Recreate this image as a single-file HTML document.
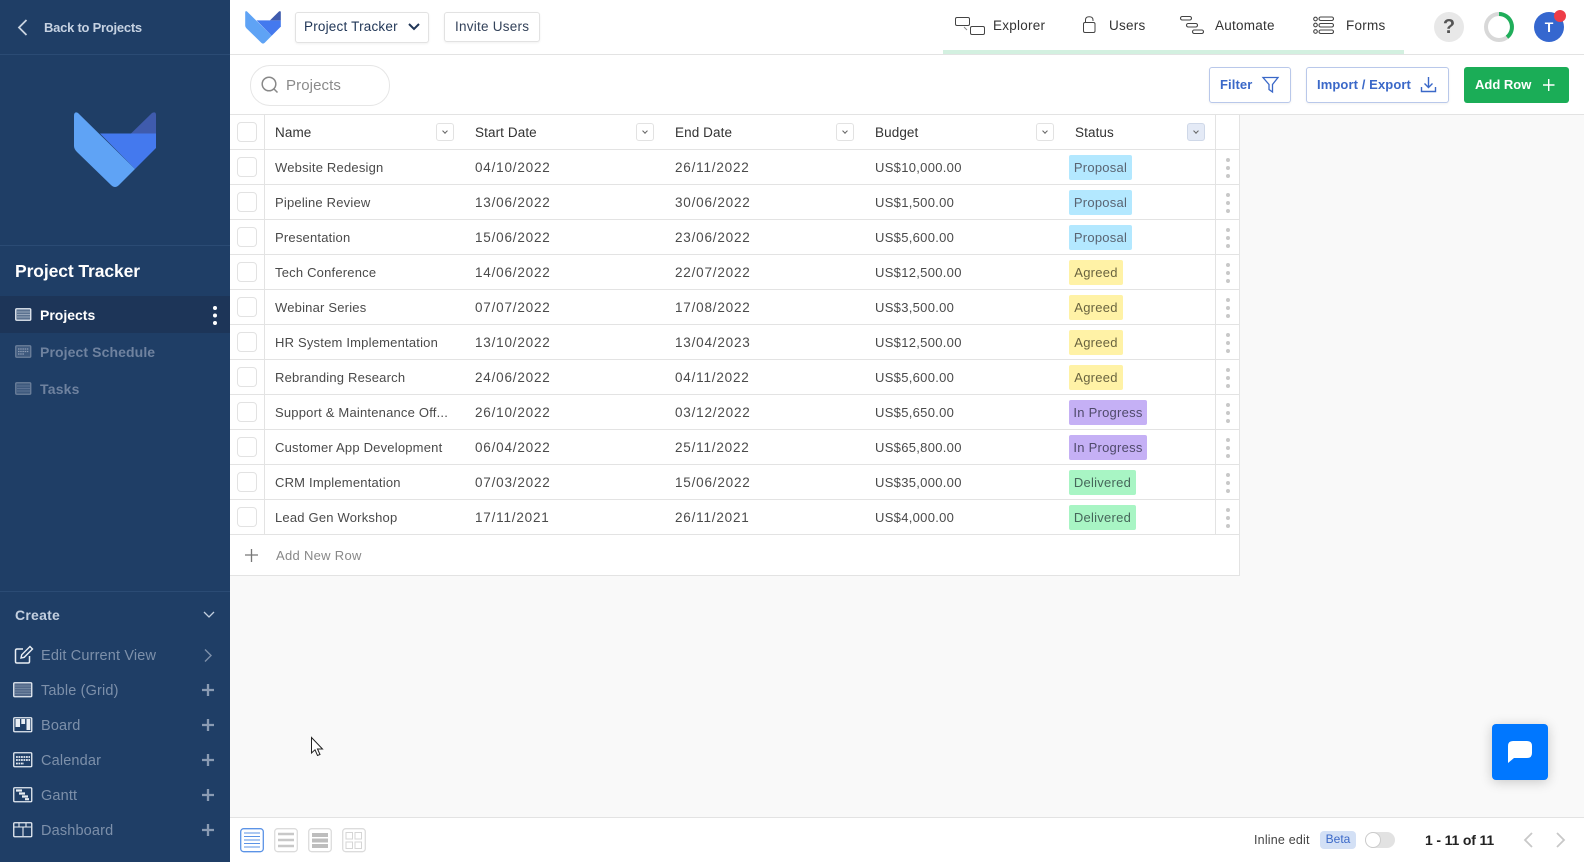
<!DOCTYPE html>
<html><head><meta charset="utf-8"><title>Project Tracker</title>
<style>
html,body{margin:0;padding:0}
body{width:1584px;height:862px;overflow:hidden;background:#f9f9f9;position:relative;font-family:"Liberation Sans",sans-serif;color:#4a4a4a;font-size:14px}
.a{position:absolute;white-space:nowrap}
svg{position:absolute;overflow:visible}
.t{position:absolute;white-space:nowrap;line-height:20px;height:20px;letter-spacing:.25px}
.n{left:275px;font-size:13px;letter-spacing:.2px;margin-top:1px}
.dt{font-size:13.5px;letter-spacing:.8px;margin-top:1px}
.s{left:475px}.e{left:675px}
.bu{left:875px;font-size:13px;letter-spacing:.3px;margin-top:1px}
.h{font-size:13.5px;letter-spacing:.1px;color:#333;top:123px}
.l{position:absolute;background:#e3e3e3}
.cb{position:absolute;left:237px;width:18px;height:18px;border:1px solid #e2e2e2;border-radius:4px;background:#fff}
.sort{position:absolute;top:123px;width:16px;height:16px;border:1px solid #e2e2e2;border-radius:3px;background:#fff}
.sort:after{content:"";position:absolute;left:5.5px;top:4.5px;width:3px;height:3px;border-right:1px solid #666;border-bottom:1px solid #666;transform:rotate(45deg)}
.badge{position:absolute;left:1069px;height:25px;line-height:25px;border-radius:2px;text-align:center;letter-spacing:.25px;font-size:13px;color:#5a6472}
.p{background:#b3e8ff;width:63px}.g{background:#fff2a6;width:54px;color:#6a6440}.i{background:#c5b0f5;width:78px;color:#4f4a6a}.d{background:#a8f5c4;width:67px;color:#46665a}
.dots{position:absolute;left:1226px;width:4px;height:4px;border-radius:50%;background:#c8c8c8;box-shadow:0 8px 0 #c8c8c8,0 16px 0 #c8c8c8}
.side{color:#7d90aa;font-size:14.5px;letter-spacing:.15px}
.nav{color:#333;font-size:13.5px;letter-spacing:.25px;top:16px}
.btn{position:absolute;background:#fff;border:1px solid #b9c8ea;border-radius:3px;box-shadow:0 1px 2px rgba(0,0,0,.06);box-sizing:border-box}
.bt{color:#3a68c8;font-size:13px;font-weight:bold;letter-spacing:.1px;top:75px}
</style></head><body>

<!-- sidebar -->
<div class="a" style="left:0;top:0;width:230px;height:862px;background:#1f3e66"></div>
<div class="a" style="left:0;top:54px;width:230px;height:1px;background:#2b4b74"></div>
<div class="a" style="left:0;top:245px;width:230px;height:1px;background:#2b4b74"></div>
<div class="a" style="left:0;top:591px;width:230px;height:1px;background:#2b4b74"></div>
<div class="a" style="left:0;top:296px;width:230px;height:37px;background:#1d3558"></div>
<svg style="left:0;top:0" width="230" height="60"><path d="M26.5 20 L19 27.5 L26.500 35" fill="none" stroke="#c9d3e0" stroke-width="1.8"/></svg>
<div class="t" style="left:44px;top:18px;color:#c6d2e2;font-size:13px;font-weight:bold;letter-spacing:-.25px">Back to Projects</div>
<svg style="left:74px;top:112px" width="82" height="76" viewBox="0 0 82 76">
<path d="M26 21.5H82V36L61 57Z" fill="#4479ee"/>
<path d="M57 21.5L78 1Q82-1 82 3V21.5Z" fill="#3f5bad"/>
<path d="M0 4Q0-1 4 1L61 57 45 73Q41 77 37 73L3 40Q0 37 0 34Z" fill="#5fa3f5"/>
</svg>
<div class="t" style="left:15px;top:261px;color:#fff;font-size:17.5px;font-weight:bold;letter-spacing:-.1px">Project Tracker</div>

<svg style="left:15px;top:308px" width="18" height="14"><rect x=".75" y=".75" width="15" height="11.5" rx="1" fill="#5b7290" stroke="#e8edf3" stroke-width="1.3"/><path d="M2 4h13M2 6.5h13M2 9h13" stroke="#a9b6c8" stroke-width=".7"/></svg>
<div class="t" style="left:40px;top:305px;color:#fff;font-size:14px;font-weight:bold;letter-spacing:0">Projects</div>
<div class="a" style="left:213px;top:306px;width:4px;height:4px;border-radius:50%;background:#fff;box-shadow:0 7.5px 0 #fff,0 15px 0 #fff"></div>

<svg style="left:15px;top:345px" width="18" height="14"><rect x=".75" y=".75" width="15" height="11.5" rx="1" fill="#3f5a7e" stroke="#6d809b" stroke-width="1.3"/><path d="M3 4h11M3 6.5h11M3 9h6" stroke="#8c9cb3" stroke-width="1.2" stroke-dasharray="1.5 .7"/></svg>
<div class="t" style="left:40px;top:342px;color:#6f829f;font-size:14px;font-weight:bold;letter-spacing:.1px">Project Schedule</div>
<svg style="left:15px;top:382px" width="18" height="14"><rect x=".75" y=".75" width="15" height="11.5" rx="1" fill="#3f5a7e" stroke="#6d809b" stroke-width="1.3"/><path d="M2 4h13M2 6.5h13M2 9h13" stroke="#66799a" stroke-width=".7"/></svg>
<div class="t" style="left:40px;top:379px;color:#6f829f;font-size:14px;font-weight:bold;letter-spacing:.2px">Tasks</div>

<div class="t" style="left:15px;top:605px;color:#c3cfdf;font-size:14px;font-weight:bold">Create</div>
<svg style="left:200px;top:609px" width="20" height="14"><path d="M4 3l5 5 5-5" fill="none" stroke="#c3cfdf" stroke-width="1.3"/></svg>

<svg style="left:14px;top:645px" width="20" height="20"><path d="M9 4H3Q1.5 4 1.5 5.5V16.5Q1.5 18 3 18H14Q15.5 18 15.5 16.5V11" fill="none" stroke="#e8edf3" stroke-width="1.5"/><path d="M7 13l.7-3.2L16 1.5l2.5 2.500-8.300 8.300Z" fill="none" stroke="#e8edf3" stroke-width="1.4"/></svg>
<div class="t side" style="left:41px;top:646px">Edit Current View</div>
<svg style="left:200px;top:647px" width="16" height="16"><path d="M5 2.500l6 6-6 6" fill="none" stroke="#7d90aa" stroke-width="1.4"/></svg>

<svg style="left:13px;top:682px" width="20" height="16"><rect x=".75" y=".75" width="18" height="14" rx="1" fill="#53698a" stroke="#e8edf3" stroke-width="1.3"/><path d="M2 4h16M2 6.500h16M2 9h16M2 11.500h16" stroke="#7b8ea8" stroke-width=".8"/></svg>
<div class="t side" style="left:41px;top:681px">Table (Grid)</div>
<svg style="left:13px;top:717px" width="20" height="16"><rect x=".75" y=".75" width="18" height="14" rx="1" fill="none" stroke="#e8edf3" stroke-width="1.3"/><path d="M2.500 2h4.500v8H2.500zM8.300 2h3.800v5H8.300zM13.500 2h3.800v11h-3.800z" fill="#e8edf3"/></svg>
<div class="t side" style="left:41px;top:716px">Board</div>
<svg style="left:13px;top:752px" width="20" height="16"><rect x=".75" y=".75" width="18" height="14" rx="1" fill="none" stroke="#e8edf3" stroke-width="1.3"/><path d="M3 5h14M3 8h14" stroke="#e8edf3" stroke-width="1.800" stroke-dasharray="1.800 .7"/><path d="M3 11.500h8" stroke="#e8edf3" stroke-width="1.800" stroke-dasharray="1.800 .7"/></svg>
<div class="t side" style="left:41px;top:751px">Calendar</div>
<svg style="left:13px;top:787px" width="20" height="16"><rect x=".75" y=".75" width="18" height="14" rx="1" fill="none" stroke="#e8edf3" stroke-width="1.3"/><path d="M3 3.500h6M6 6.500h6M9 9.500h6M12 12.200h4" stroke="#e8edf3" stroke-width="2.200"/></svg>
<div class="t side" style="left:41px;top:786px">Gantt</div>
<svg style="left:13px;top:822px" width="20" height="16"><rect x=".75" y=".75" width="18" height="14" rx="1" fill="none" stroke="#e8edf3" stroke-width="1.3"/><path d="M1 5h17M10 5v9M6 1v4M13 1v4" stroke="#e8edf3" stroke-width="1.100"/></svg>
<div class="t side" style="left:41px;top:821px">Dashboard</div>
<svg style="left:202px;top:683px" width="14" height="160"><g stroke="#8a9bb3" stroke-width="2.300"><path d="M0 7h12M6 1v12"/><path d="M0 42h12M6 36v12"/><path d="M0 77h12M6 71v12"/><path d="M0 112h12M6 106v12"/><path d="M0 147h12M6 141v12"/></g></svg>

<!-- top bar -->
<div class="a" style="left:230px;top:0;width:1354px;height:114px;background:#fff"></div>
<div class="l" style="left:230px;top:54px;width:1354px;height:1px"></div>
<div class="l" style="left:230px;top:114px;width:1354px;height:1px"></div>
<div class="a" style="left:943px;top:50px;width:461px;height:4px;background:#d3f0e0"></div>
<svg style="left:245px;top:11px" width="36" height="33" viewBox="0 0 82 76">
<path d="M26 21.500H82V36L61 57Z" fill="#4479ee"/>
<path d="M57 21.500L78 1Q82-1 82 3V21.500Z" fill="#3f5bad"/>
<path d="M0 4Q0-1 4 1L61 57 45 73Q41 77 37 73L3 40Q0 37 0 34Z" fill="#5fa3f5"/>
</svg>
<div class="btn" style="left:295px;top:12px;width:134px;height:31px;border-color:#e2e2e2"></div>
<div class="t" style="left:304px;top:17px;color:#1f3556;font-size:13.5px;letter-spacing:.2px">Project Tracker</div>
<svg style="left:407px;top:21px" width="14" height="12"><path d="M2 3l5 5 5-5" fill="none" stroke="#1f3556" stroke-width="2"/></svg>
<div class="btn" style="left:444px;top:12px;width:96px;height:30px;border-color:#e2e2e2"></div>
<div class="t" style="left:455px;top:17px;color:#33425a;font-size:13.5px;letter-spacing:.25px">Invite Users</div>

<svg style="left:955px;top:15px" width="34" height="24" fill="none" stroke="#444" stroke-width="1"><rect x=".5" y="2.500" width="14" height="8" rx="1.500"/><rect x="15.500" y="11.500" width="14" height="8" rx="1.500"/><path d="M9 12l3 3" stroke="#888"/></svg>
<div class="t nav" style="left:993px">Explorer</div>
<svg style="left:1083px;top:16px" width="16" height="20" fill="none" stroke="#444" stroke-width="1"><rect x=".5" y="6.500" width="11.500" height="10" rx="1.500"/><path d="M2.500 6.500V4Q2.500 .8 6.200 .8T10 4V5"/></svg>
<div class="t nav" style="left:1109px">Users</div>
<svg style="left:1180px;top:13px" width="26" height="24" fill="none" stroke="#444" stroke-width="1.100"><rect x=".5" y="3.500" width="11" height="3.500" rx="1.700"/><rect x="6.500" y="10.500" width="11" height="3.500" rx="1.700"/><rect x="12.500" y="17" width="11" height="3.500" rx="1.700"/></svg>
<div class="t nav" style="left:1215px">Automate</div>
<svg style="left:1313px;top:13px" width="22" height="24" fill="none" stroke="#444" stroke-width="1.100"><circle cx="2.500" cy="6" r="1.800"/><circle cx="2.500" cy="12" r="1.800"/><circle cx="2.500" cy="18.500" r="1.800"/><rect x="6" y="4" width="14.500" height="3.500" rx="1.700"/><rect x="6" y="10.500" width="14.500" height="3.500" rx="1.700"/><rect x="6" y="17" width="14.500" height="3.500" rx="1.700"/></svg>
<div class="t nav" style="left:1346px">Forms</div>

<div class="a" style="left:1434px;top:12px;width:30px;height:30px;border-radius:50%;background:#e8e8e8;text-align:center;line-height:30px;font-size:20px;font-weight:bold;color:#555">?</div>
<svg style="left:1484px;top:12px" width="30" height="30" fill="none" stroke-width="4"><circle cx="15" cy="15" r="13" stroke="#d8d8d8"/><path d="M15 2A13 13 0 0 1 23 25.200" stroke="#1fae5a"/></svg>
<div class="a" style="left:1534px;top:12px;width:30px;height:30px;border-radius:50%;background:#3567cf;text-align:center;line-height:30px;font-size:14px;font-weight:bold;color:#fff">T</div>
<div class="a" style="left:1554px;top:10px;width:12px;height:12px;border-radius:50%;background:#ee3d48"></div>

<!-- toolbar -->
<div class="a" style="left:250px;top:65px;width:138px;height:39px;border:1px solid #e6e6e6;border-radius:20px;background:#fff"></div>
<svg style="left:261px;top:76px" width="20" height="20" fill="none" stroke="#888" stroke-width="1.500"><circle cx="8" cy="8" r="6.800"/><path d="M13 13l3.500 3.500"/></svg>
<div class="t" style="left:286px;top:76px;color:#8a8a8a;font-size:15px;letter-spacing:.1px">Projects</div>

<div class="btn" style="left:1209px;top:67px;width:82px;height:36px"></div>
<div class="t bt" style="left:1220px">Filter</div>
<svg style="left:1262px;top:76px" width="18" height="18" fill="none" stroke="#3a68c8" stroke-width="1.300"><path d="M1 1.500H16L10.500 8.500V16L7 13.500V8.500Z"/></svg>
<div class="btn" style="left:1306px;top:67px;width:143px;height:36px"></div>
<div class="t bt" style="left:1317px">Import / Export</div>
<svg style="left:1420px;top:76px" width="18" height="18" fill="none" stroke="#3a68c8" stroke-width="1.400"><path d="M8.500 1v10M4.500 7.500l4 4 4-4M1.500 11v4.500h14V11"/></svg>
<div class="a" style="left:1464px;top:67px;width:105px;height:36px;background:#1bad57;border-radius:3px"></div>
<div class="t" style="left:1475px;top:75px;color:#fff;font-size:13px;font-weight:bold;letter-spacing:0">Add Row</div>
<svg style="left:1542px;top:78px" width="14" height="14"><path d="M1 7h11.500M6.700 1v12" stroke="#fff" stroke-width="1.400"/></svg>

<!-- table -->
<div class="a" style="left:230px;top:115px;width:1009px;height:460px;background:#fff"></div>
<div class="l" style="left:1239px;top:114px;width:1px;height:461px"></div>
<div class="l" style="left:230px;top:575px;width:1010px;height:1px"></div>
<div class="l" style="left:264px;top:115px;width:1px;height:419px"></div>
<div class="l" style="left:1215px;top:115px;width:1px;height:419px"></div>
<div class="l" style="left:230px;top:149px;width:1009px;height:1px"></div>
<div class="l" style="left:230px;top:184px;width:1009px;height:1px"></div>
<div class="l" style="left:230px;top:219px;width:1009px;height:1px"></div>
<div class="l" style="left:230px;top:254px;width:1009px;height:1px"></div>
<div class="l" style="left:230px;top:289px;width:1009px;height:1px"></div>
<div class="l" style="left:230px;top:324px;width:1009px;height:1px"></div>
<div class="l" style="left:230px;top:359px;width:1009px;height:1px"></div>
<div class="l" style="left:230px;top:394px;width:1009px;height:1px"></div>
<div class="l" style="left:230px;top:429px;width:1009px;height:1px"></div>
<div class="l" style="left:230px;top:464px;width:1009px;height:1px"></div>
<div class="l" style="left:230px;top:499px;width:1009px;height:1px"></div>
<div class="l" style="left:230px;top:534px;width:1009px;height:1px"></div>

<div class="cb" style="top:122px"></div>
<div class="t h" style="left:275px">Name</div>
<div class="sort" style="left:436px"></div>
<div class="t h" style="left:475px">Start Date</div>
<div class="sort" style="left:636px"></div>
<div class="t h" style="left:675px">End Date</div>
<div class="sort" style="left:836px"></div>
<div class="t h" style="left:875px">Budget</div>
<div class="sort" style="left:1036px"></div>
<div class="t h" style="left:1075px">Status</div>
<div class="sort" style="left:1187px;background:#e4eaf6;border-color:#cfd8e8"></div>

<div class="cb" style="top:157px"></div><div class="t n" style="top:157px">Website Redesign</div><div class="t dt s" style="top:157px">04/10/2022</div><div class="t dt e" style="top:157px">26/11/2022</div><div class="t bu" style="top:157px">US$10,000.00</div><div class="badge p" style="top:155px">Proposal</div><div class="dots" style="top:158px"></div>
<div class="cb" style="top:192px"></div><div class="t n" style="top:192px">Pipeline Review</div><div class="t dt s" style="top:192px">13/06/2022</div><div class="t dt e" style="top:192px">30/06/2022</div><div class="t bu" style="top:192px">US$1,500.00</div><div class="badge p" style="top:190px">Proposal</div><div class="dots" style="top:193px"></div>
<div class="cb" style="top:227px"></div><div class="t n" style="top:227px">Presentation</div><div class="t dt s" style="top:227px">15/06/2022</div><div class="t dt e" style="top:227px">23/06/2022</div><div class="t bu" style="top:227px">US$5,600.00</div><div class="badge p" style="top:225px">Proposal</div><div class="dots" style="top:228px"></div>
<div class="cb" style="top:262px"></div><div class="t n" style="top:262px">Tech Conference</div><div class="t dt s" style="top:262px">14/06/2022</div><div class="t dt e" style="top:262px">22/07/2022</div><div class="t bu" style="top:262px">US$12,500.00</div><div class="badge g" style="top:260px">Agreed</div><div class="dots" style="top:263px"></div>
<div class="cb" style="top:297px"></div><div class="t n" style="top:297px">Webinar Series</div><div class="t dt s" style="top:297px">07/07/2022</div><div class="t dt e" style="top:297px">17/08/2022</div><div class="t bu" style="top:297px">US$3,500.00</div><div class="badge g" style="top:295px">Agreed</div><div class="dots" style="top:298px"></div>
<div class="cb" style="top:332px"></div><div class="t n" style="top:332px">HR System Implementation</div><div class="t dt s" style="top:332px">13/10/2022</div><div class="t dt e" style="top:332px">13/04/2023</div><div class="t bu" style="top:332px">US$12,500.00</div><div class="badge g" style="top:330px">Agreed</div><div class="dots" style="top:333px"></div>
<div class="cb" style="top:367px"></div><div class="t n" style="top:367px">Rebranding Research</div><div class="t dt s" style="top:367px">24/06/2022</div><div class="t dt e" style="top:367px">04/11/2022</div><div class="t bu" style="top:367px">US$5,600.00</div><div class="badge g" style="top:365px">Agreed</div><div class="dots" style="top:368px"></div>
<div class="cb" style="top:402px"></div><div class="t n" style="top:402px">Support &amp; Maintenance Off...</div><div class="t dt s" style="top:402px">26/10/2022</div><div class="t dt e" style="top:402px">03/12/2022</div><div class="t bu" style="top:402px">US$5,650.00</div><div class="badge i" style="top:400px">In Progress</div><div class="dots" style="top:403px"></div>
<div class="cb" style="top:437px"></div><div class="t n" style="top:437px">Customer App Development</div><div class="t dt s" style="top:437px">06/04/2022</div><div class="t dt e" style="top:437px">25/11/2022</div><div class="t bu" style="top:437px">US$65,800.00</div><div class="badge i" style="top:435px">In Progress</div><div class="dots" style="top:438px"></div>
<div class="cb" style="top:472px"></div><div class="t n" style="top:472px">CRM Implementation</div><div class="t dt s" style="top:472px">07/03/2022</div><div class="t dt e" style="top:472px">15/06/2022</div><div class="t bu" style="top:472px">US$35,000.00</div><div class="badge d" style="top:470px">Delivered</div><div class="dots" style="top:473px"></div>
<div class="cb" style="top:507px"></div><div class="t n" style="top:507px">Lead Gen Workshop</div><div class="t dt s" style="top:507px">17/11/2021</div><div class="t dt e" style="top:507px">26/11/2021</div><div class="t bu" style="top:507px">US$4,000.00</div><div class="badge d" style="top:505px">Delivered</div><div class="dots" style="top:508px"></div>

<svg style="left:244px;top:548px" width="16" height="16"><path d="M1 7h13M7.500 1v13" stroke="#777" stroke-width="1.300"/></svg>
<div class="t" style="left:276px;top:545px;color:#888;font-size:13px;letter-spacing:.3px;line-height:22px">Add New Row</div>

<!-- cursor -->
<svg style="left:311px;top:737px" width="14" height="21"><path d="M.5.500V16L4 12.800 6.500 18.500 9 17.500 6.500 12H11.500Z" fill="#fff" stroke="#222" stroke-width="1"/></svg>

<!-- chat -->
<div class="a" style="left:1492px;top:724px;width:56px;height:56px;background:#0077ff;border-radius:4px;box-shadow:0 2px 12px rgba(0,0,0,.2)"></div>
<svg style="left:1508px;top:741px" width="24" height="22"><path d="M5 0H19Q24 0 24 5V12Q24 17 19 17H6L0 22V5Q0 0 5 0Z" fill="#fff"/></svg>

<!-- footer -->
<div class="a" style="left:230px;top:817px;width:1354px;height:45px;background:#fff"></div>
<div class="l" style="left:230px;top:817px;width:1354px;height:1px"></div>
<svg style="left:240px;top:828px" width="125" height="25" fill="none">
<rect x=".7" y=".7" width="22.600" height="23" rx="3" stroke="#5b93e6" stroke-width="1.300"/>
<path d="M4 5h16M4 8.500h16M4 12h16M4 15.500h16M4 19h16" stroke="#5b93e6" stroke-width="1"/>
<rect x="34.700" y=".7" width="22.600" height="23" rx="3" stroke="#dcdcdc" stroke-width="1.300"/>
<path d="M38 6h16M38 12h16M38 18h16" stroke="#c8c8c8" stroke-width="2.500"/>
<rect x="68.700" y=".7" width="22.600" height="23" rx="3" stroke="#dcdcdc" stroke-width="1.300"/>
<path d="M72 7h16M72 12.500h16M72 18h16" stroke="#bdbdbd" stroke-width="4"/>
<rect x="102.700" y=".7" width="22.600" height="23" rx="3" stroke="#dcdcdc" stroke-width="1.300"/>
<path d="M106 4.500h6.500v6.500H106zM115 4.500h6.500v6.500H115zM106 14h6.500v6.500H106zM115 14h6.500v6.500H115z" stroke="#d5d5d5" stroke-width="1"/>
</svg>
<div class="t" style="left:1254px;top:830px;color:#444;font-size:12.500px;letter-spacing:.2px">Inline edit</div>
<div class="a" style="left:1320px;top:831px;width:36px;height:18px;line-height:17px;background:#d3e0f5;border-radius:4px;text-align:center;color:#3a68c8;font-size:12px">Beta</div>
<div class="a" style="left:1365px;top:832px;width:30px;height:16px;background:#e2e2e2;border-radius:8px"></div>
<div class="a" style="left:1365px;top:832px;width:14px;height:14px;background:#fff;border:1px solid #ccc;border-radius:50%"></div>
<div class="t" style="left:1425px;top:830px;color:#222;font-size:14px;font-weight:bold;letter-spacing:-.15px">1 - 11 of 11</div>
<svg style="left:1522px;top:832px" width="50" height="16" fill="none" stroke="#c8c8c8" stroke-width="1.800"><path d="M10 1L3 8l7 7M35 1l7 7-7 7"/></svg>
</body></html>
